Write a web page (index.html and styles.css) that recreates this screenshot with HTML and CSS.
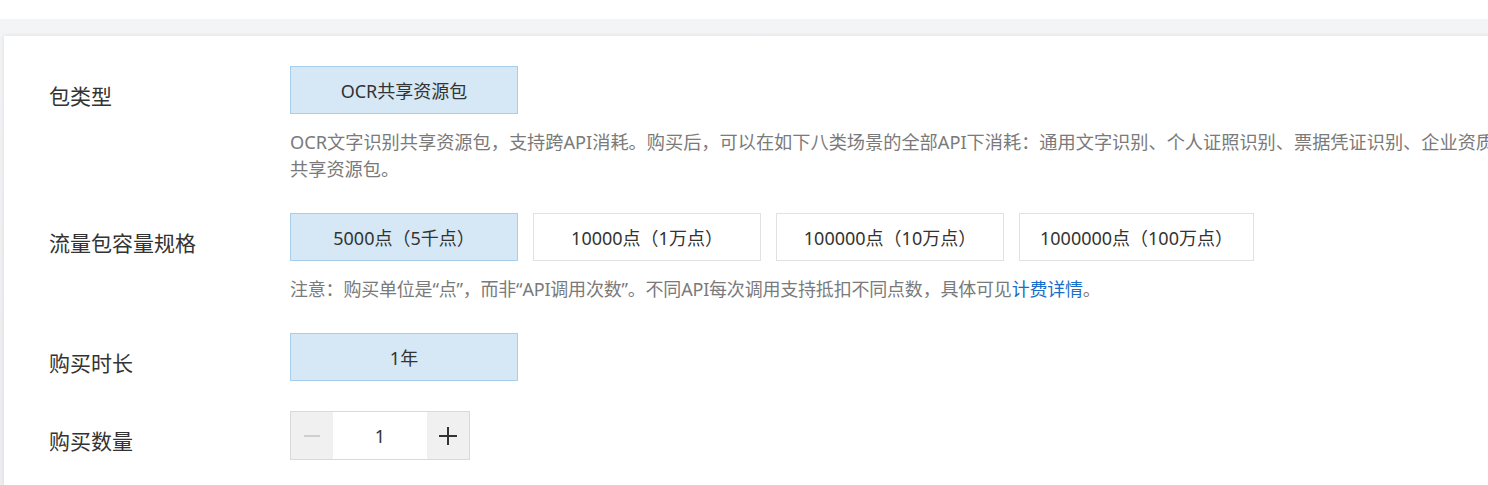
FILE: index.html
```html
<!DOCTYPE html>
<html lang="zh-CN">
<head>
  <meta charset="UTF-8">
  <title>OCR共享资源包购买</title>
  <meta name="viewport" content="width=device-width, initial-scale=1.0">
  <link rel="stylesheet" href="styles.css">
</head>
<body>

  <div class="top-bar"></div>

  <div class="page">
    <div class="card">

      <div class="row">
        <div class="label">包类型</div>
        <div class="field">
          <div class="options">
            <button class="option selected">OCR共享资源包</button>
          </div>
          <p class="desc">OCR文字识别共享资源包，支持跨API消耗。购买后，可以在如下八类场景的全部API下消耗：通用文字识别、个人证照识别、票据凭证识别、企业资质<br>共享资源包。</p>
        </div>
      </div>

      <div class="row">
        <div class="label">流量包容量规格</div>
        <div class="field">
          <div class="options">
            <button class="option selected">5000点（5千点）</button>
            <button class="option">10000点（1万点）</button>
            <button class="option">100000点（10万点）</button>
            <button class="option">1000000点（100万点）</button>
          </div>
          <p class="desc note">注意：购买单位是“点”，而非“API调用次数”。不同API每次调用支持抵扣不同点数，具体可见<a href="#">计费详情</a>。</p>
        </div>
      </div>

      <div class="row">
        <div class="label">购买时长</div>
        <div class="field">
          <div class="options">
            <button class="option selected">1年</button>
          </div>
        </div>
      </div>

      <div class="row">
        <div class="label">购买数量</div>
        <div class="field">
          <div class="stepper">
            <button class="step minus" disabled>
              <svg width="20" height="20" viewBox="0 0 20 20"><path d="M2 10h16" stroke="#cfcfcf" stroke-width="2"/></svg>
            </button>
            <input class="count" type="text" value="1">
            <button class="step plus">
              <svg width="20" height="20" viewBox="0 0 20 20"><path d="M1 10h18M10 1v18" stroke="#333" stroke-width="2"/></svg>
            </button>
          </div>
        </div>
      </div>

    </div>
  </div>

</body>
</html>
```

FILE: styles.css
```css
* {
  box-sizing: border-box;
}

html, body {
  margin: 0;
  overflow: hidden;
}

body {
  font-family: "Noto Sans", "Noto Sans CJK SC", sans-serif;
  background-color: #fff;
  color: #333;
}

.top-bar {
  height: 19px;
  background-color: #fff;
}

.page {
  background: linear-gradient(#f3f4f6, #eceef1);
  padding: 17px 0 0 4px;
  height: 466px;
}

.card {
  width: 1800px;
  height: 100%;
  background-color: #fff;
  box-shadow: 0 0 4px rgba(0, 0, 0, 0.1);
  padding: 30px 0 0 45px;
}

.row {
  display: flex;
  margin-bottom: 30px;
}

.label {
  width: 241px;
  height: 48px;
  flex-shrink: 0;
  font-family: "Noto Sans CJK SC", sans-serif;
  font-size: 21px;
  line-height: 36px;
  padding-top: 11px;
  color: #333;
}

.field {
  flex: 1;
}

.options {
  display: flex;
  gap: 15px;
}

.option {
  min-width: 228px;
  height: 48px;
  padding: 0 20px;
  font-family: inherit;
  font-size: 18px;
  color: #333;
  background-color: #fff;
  border: 1px solid #e1e1e1;
  cursor: pointer;
}

.option.selected {
  background-color: #d6e8f6;
  border-color: #a9cdec;
}

.desc {
  margin: 15px 0 0;
  font-size: 18.2px;
  line-height: 27px;
  color: #7a7a7a;
  white-space: nowrap;
}

.note {
  font-size: 18px;
  letter-spacing: -0.2px;
}

.desc a {
  color: #1a6dc9;
  text-decoration: none;
}

.stepper {
  display: flex;
  width: 180px;
  height: 49px;
  border: 1px solid #d9d9d9;
}

.step {
  width: 43px;
  border: none;
  background-color: #f0f0f0;
  display: flex;
  align-items: center;
  justify-content: center;
  padding: 0;
  cursor: pointer;
}

.count {
  width: 94px;
  border: none;
  text-align: center;
  font-family: inherit;
  font-size: 18px;
  color: #333;
  outline: none;
}
```
